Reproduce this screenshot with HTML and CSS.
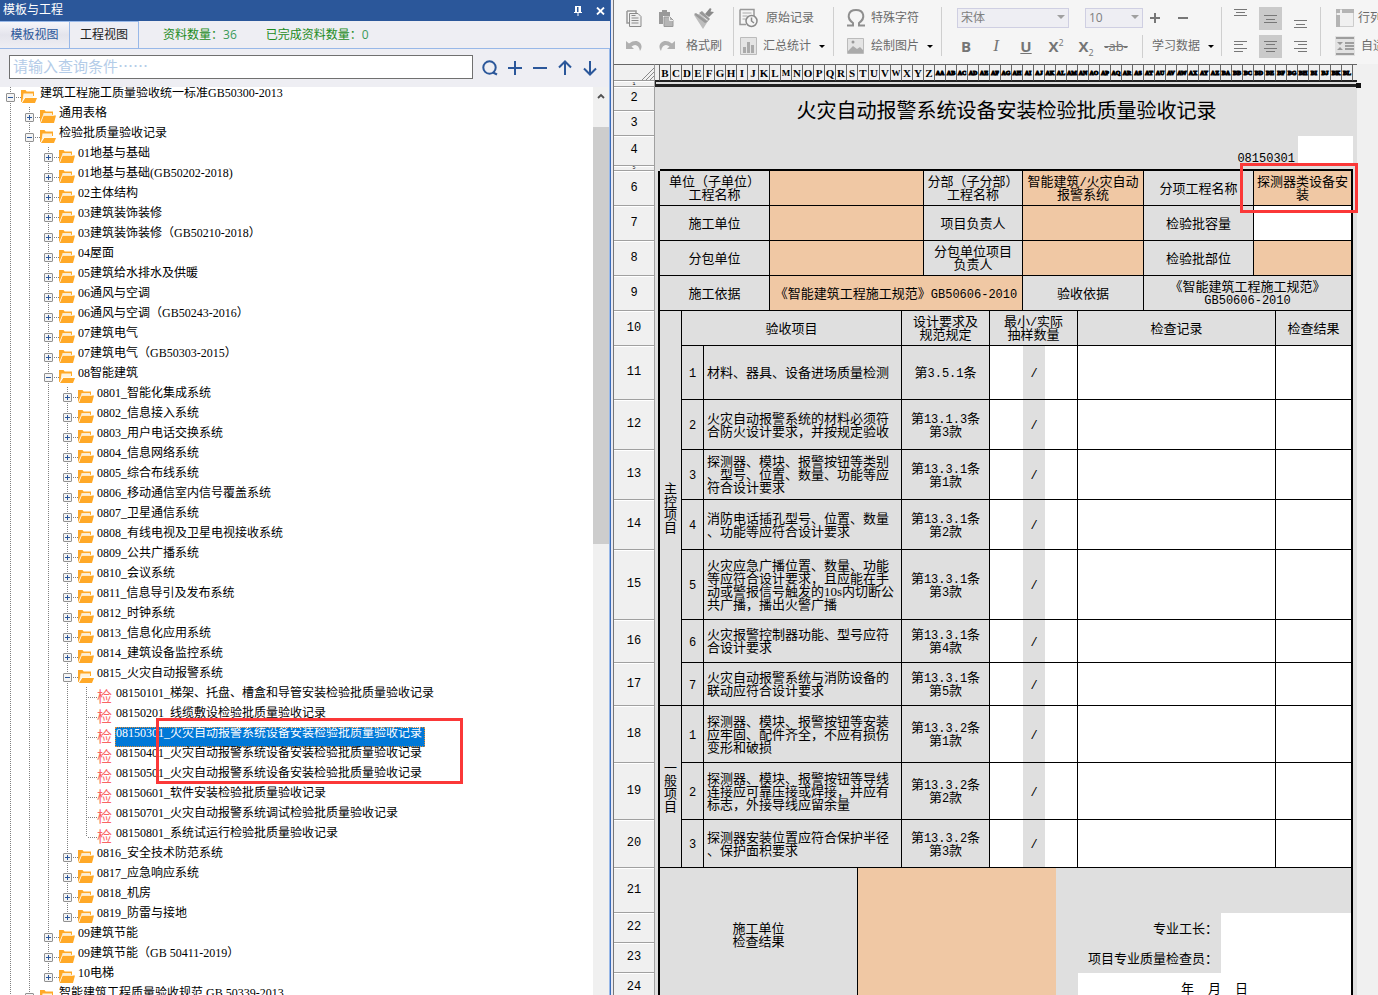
FILE: index.html
```html
<!DOCTYPE html>
<html lang="zh-CN">
<head>
<meta charset="utf-8">
<title>模板与工程</title>
<link rel="stylesheet" href="styles.css">
</head>
<body>
<svg class="defs" aria-hidden="true">
  <symbol id="fe" viewBox="0 0 16 13"><path d="M0 12V0h4.500l1.200 1.500H13V5H4L.5 12z" fill="#ffa928"/><path d="M3.500 3H12v2.500H3z" fill="#fdebc8"/><path d="M3.600 5.500H16L14 13H.6z" fill="#ffa928"/><path d="M.8 12L3.400 5.200H14" fill="none" stroke="#fff" stroke-width=".7"/></symbol>
  <symbol id="fo" viewBox="0 0 16 13"><path d="M0 12V0h4.500l1.200 1.500H13V6H3.600L.6 12z" fill="#ffa928"/><path d="M2.500 3.500H12v4H3L1.500 11z" fill="#fff3dc"/><path d="M4.200 8H16l-2 5H1z" fill="#ffa928"/></symbol>
</svg>
<div class="app">
  <aside class="dock">
    <header class="dock-title">
      <span>模板与工程</span>
      <span class="dock-tools">
        <button aria-label="固定"><svg width="8" height="10" viewBox="0 0 8 10"><path d="M1 0h6v6h1v1H4.500v3h-1V7H0V6h1z" fill="#fff"/><path d="M3 1h1.500v5H3z" fill="#2b579a"/></svg></button>
        <button aria-label="关闭"><svg width="9" height="8" viewBox="0 0 9 8"><path d="M1 .5l7 7M8 .5l-7 7" stroke="#fff" stroke-width="1.800"/></svg></button>
      </span>
    </header>
    <div class="tabs">
      <button class="tab on">模板视图</button><button class="tab">工程视图</button>
      <span class="stat">资料数量：<b>36</b></span>
      <span class="stat">已完成资料数量：<b>0</b></span>
    </div>
    <div class="search">
      <input type="text" aria-label="查询条件" placeholder="请输入查询条件……">
      <button aria-label="查询"><svg width="16" height="16" viewBox="0 0 16 16"><circle cx="7.500" cy="7.500" r="6.200"/><path d="M11 12.500l4 2"/></svg></button>
      <button aria-label="展开"><svg width="16" height="16" viewBox="0 0 16 16"><path d="M8 1v14M1 8h14"/></svg></button>
      <button aria-label="收起"><svg width="16" height="16" viewBox="0 0 16 16"><path d="M1 8h14"/></svg></button>
      <button aria-label="上一个"><svg width="16" height="16" viewBox="0 0 16 16"><path d="M8 15V2M2 7.500L8 1.500l6 6"/></svg></button>
      <button aria-label="下一个"><svg width="16" height="16" viewBox="0 0 16 16"><path d="M8 1v13M2 8.500l6 6 6-6"/></svg></button>
    </div>
    <div class="tree-area">
      <div class="tree-view">
      <ul class="tree">
        <li class="more"><div class="row"><button class="tg minus" aria-label="收起"></button><svg class="ic"><use href="#fo"/></svg><span>建筑工程施工质量验收统一标准GB50300-2013</span></div>
        <ul>
          <li><div class="row"><button class="tg" aria-label="展开"></button><svg class="ic"><use href="#fe"/></svg><span>通用表格</span></div></li>
          <li><div class="row"><button class="tg minus" aria-label="收起"></button><svg class="ic"><use href="#fo"/></svg><span>检验批质量验收记录</span></div>
          <ul>
            <li><div class="row"><button class="tg" aria-label="展开"></button><svg class="ic"><use href="#fe"/></svg><span>01地基与基础</span></div></li>
            <li><div class="row"><button class="tg" aria-label="展开"></button><svg class="ic"><use href="#fe"/></svg><span>01地基与基础(GB50202-2018)</span></div></li>
            <li><div class="row"><button class="tg" aria-label="展开"></button><svg class="ic"><use href="#fe"/></svg><span>02主体结构</span></div></li>
            <li><div class="row"><button class="tg" aria-label="展开"></button><svg class="ic"><use href="#fe"/></svg><span>03建筑装饰装修</span></div></li>
            <li><div class="row"><button class="tg" aria-label="展开"></button><svg class="ic"><use href="#fe"/></svg><span>03建筑装饰装修（GB50210-2018）</span></div></li>
            <li><div class="row"><button class="tg" aria-label="展开"></button><svg class="ic"><use href="#fe"/></svg><span>04屋面</span></div></li>
            <li><div class="row"><button class="tg" aria-label="展开"></button><svg class="ic"><use href="#fe"/></svg><span>05建筑给水排水及供暖</span></div></li>
            <li><div class="row"><button class="tg" aria-label="展开"></button><svg class="ic"><use href="#fe"/></svg><span>06通风与空调</span></div></li>
            <li><div class="row"><button class="tg" aria-label="展开"></button><svg class="ic"><use href="#fe"/></svg><span>06通风与空调（GB50243-2016）</span></div></li>
            <li><div class="row"><button class="tg" aria-label="展开"></button><svg class="ic"><use href="#fe"/></svg><span>07建筑电气</span></div></li>
            <li><div class="row"><button class="tg" aria-label="展开"></button><svg class="ic"><use href="#fe"/></svg><span>07建筑电气（GB50303-2015）</span></div></li>
            <li><div class="row"><button class="tg minus" aria-label="收起"></button><svg class="ic"><use href="#fo"/></svg><span>08智能建筑</span></div>
            <ul>
              <li><div class="row"><button class="tg" aria-label="展开"></button><svg class="ic"><use href="#fe"/></svg><span>0801_智能化集成系统</span></div></li>
              <li><div class="row"><button class="tg" aria-label="展开"></button><svg class="ic"><use href="#fe"/></svg><span>0802_信息接入系统</span></div></li>
              <li><div class="row"><button class="tg" aria-label="展开"></button><svg class="ic"><use href="#fe"/></svg><span>0803_用户电话交换系统</span></div></li>
              <li><div class="row"><button class="tg" aria-label="展开"></button><svg class="ic"><use href="#fe"/></svg><span>0804_信息网络系统</span></div></li>
              <li><div class="row"><button class="tg" aria-label="展开"></button><svg class="ic"><use href="#fe"/></svg><span>0805_综合布线系统</span></div></li>
              <li><div class="row"><button class="tg" aria-label="展开"></button><svg class="ic"><use href="#fe"/></svg><span>0806_移动通信室内信号覆盖系统</span></div></li>
              <li><div class="row"><button class="tg" aria-label="展开"></button><svg class="ic"><use href="#fe"/></svg><span>0807_卫星通信系统</span></div></li>
              <li><div class="row"><button class="tg" aria-label="展开"></button><svg class="ic"><use href="#fe"/></svg><span>0808_有线电视及卫星电视接收系统</span></div></li>
              <li><div class="row"><button class="tg" aria-label="展开"></button><svg class="ic"><use href="#fe"/></svg><span>0809_公共广播系统</span></div></li>
              <li><div class="row"><button class="tg" aria-label="展开"></button><svg class="ic"><use href="#fe"/></svg><span>0810_会议系统</span></div></li>
              <li><div class="row"><button class="tg" aria-label="展开"></button><svg class="ic"><use href="#fe"/></svg><span>0811_信息导引及发布系统</span></div></li>
              <li><div class="row"><button class="tg" aria-label="展开"></button><svg class="ic"><use href="#fe"/></svg><span>0812_时钟系统</span></div></li>
              <li><div class="row"><button class="tg" aria-label="展开"></button><svg class="ic"><use href="#fe"/></svg><span>0813_信息化应用系统</span></div></li>
              <li><div class="row"><button class="tg" aria-label="展开"></button><svg class="ic"><use href="#fe"/></svg><span>0814_建筑设备监控系统</span></div></li>
              <li><div class="row"><button class="tg minus" aria-label="收起"></button><svg class="ic"><use href="#fo"/></svg><span>0815_火灾自动报警系统</span></div>
              <ul class="leaves">
                <li><div class="row"><i>检</i><span>08150101_梯架、托盘、槽盒和导管安装检验批质量验收记录</span></div></li>
                <li><div class="row"><i>检</i><span>08150201_线缆敷设检验批质量验收记录</span></div></li>
                <li><div class="row"><i>检</i><span class="sel">08150301_火灾自动报警系统设备安装检验批质量验收记录</span><em class="mark mark-tree"></em></div></li>
                <li><div class="row"><i>检</i><span>08150401_火灾自动报警系统设备安装检验批质量验收记录</span></div></li>
                <li><div class="row"><i>检</i><span>08150501_火灾自动报警系统设备安装检验批质量验收记录</span></div></li>
                <li><div class="row"><i>检</i><span>08150601_软件安装检验批质量验收记录</span></div></li>
                <li><div class="row"><i>检</i><span>08150701_火灾自动报警系统调试检验批质量验收记录</span></div></li>
                <li><div class="row"><i>检</i><span>08150801_系统试运行检验批质量验收记录</span></div></li>
              </ul></li>
              <li><div class="row"><button class="tg" aria-label="展开"></button><svg class="ic"><use href="#fe"/></svg><span>0816_安全技术防范系统</span></div></li>
              <li><div class="row"><button class="tg" aria-label="展开"></button><svg class="ic"><use href="#fe"/></svg><span>0817_应急响应系统</span></div></li>
              <li><div class="row"><button class="tg" aria-label="展开"></button><svg class="ic"><use href="#fe"/></svg><span>0818_机房</span></div></li>
              <li><div class="row"><button class="tg" aria-label="展开"></button><svg class="ic"><use href="#fe"/></svg><span>0819_防雷与接地</span></div></li>
            </ul></li>
            <li><div class="row"><button class="tg" aria-label="展开"></button><svg class="ic"><use href="#fe"/></svg><span>09建筑节能</span></div></li>
            <li><div class="row"><button class="tg" aria-label="展开"></button><svg class="ic"><use href="#fe"/></svg><span>09建筑节能（GB 50411-2019）</span></div></li>
            <li><div class="row"><button class="tg" aria-label="展开"></button><svg class="ic"><use href="#fe"/></svg><span>10电梯</span></div></li>
          </ul></li>
          <li class="more"><div class="row"><button class="tg minus" aria-label="收起"></button><svg class="ic"><use href="#fo"/></svg><span>智能建筑工程质量验收规范 GB 50339-2013</span></div></li>
        </ul></li>
      </ul>
      </div>
      <div class="scroll"><svg width="8" height="6" viewBox="0 0 8 6"><path d="M1 5l3-3 3 3" fill="none" stroke="#505050" stroke-width="1.800"/></svg><div class="thumb"></div></div>
    </div>
  </aside>

  <main class="work">
    <div class="toolbar">
      <div class="grp g1">
        <div class="line">
          <button aria-label="复制"><svg width="16" height="17" viewBox="0 0 16 17"><path d="M1 1h9v2M1 1v12h2" fill="none" stroke="#999" stroke-width="1.500"/><path d="M3.500 3.500H12l3 3v10H3.500z" fill="#eee" stroke="#8a8a8a"/><path d="M5.500 8h7M5.500 10.500h7M5.500 13h7M5.500 5.500h4" stroke="#8a8a8a"/></svg></button>
          <button aria-label="粘贴"><svg width="16" height="17" viewBox="0 0 16 17"><path d="M1 2h3V0h5v2h3v4H5v8H1z" fill="#999"/><path d="M6 7h6l3 3v6.500H6z" fill="#b5b5b5" stroke="#999"/><path d="M11.500 7v3.500H15" fill="none" stroke="#eee"/></svg></button>
          <button class="wide" aria-label="格式刷工具"><svg width="22" height="21" viewBox="0 0 22 21"><path d="M1 7l6-1 8 7-5 8z" fill="#bdbdbd"/><path d="M1 6l2-1 11 8 1-1-9-7 3-2 8 8-3 3-2 1L3 8z" fill="#999"/><path d="M12 6l5-6 1.500 1-1 2.500L21 4l-5 5z" fill="#8a8a8a"/></svg></button>
        </div>
        <div class="line">
          <button aria-label="撤销"><svg width="17" height="12" viewBox="0 0 17 12"><path d="M0 1v8h8L5.500 6.500C9 3.500 13 5 14 11c5-7-3-14-11-7.500z" fill="#b0b0b0"/></svg></button>
          <button aria-label="重做"><svg width="17" height="12" viewBox="0 0 17 12"><path d="M17 1v8H9l2.500-2.500C8 3.500 4 5 3 11-2 4 6-3 14 3.500z" fill="#b0b0b0"/></svg></button>
          <button class="wide">格式刷</button>
        </div>
      </div>
      <div class="sep"></div>
      <div class="grp g2">
        <div class="line">
          <button class="txt"><svg width="22" height="20" viewBox="0 0 22 20"><path d="M2 1.500h14V8M2 1.500v15h6" fill="none" stroke="#999" stroke-width="1.500"/><path d="M4.500 5h9M4.500 8h5M4.500 11h3" stroke="#aaa"/><circle cx="13.500" cy="13" r="5.500" fill="#f5f5f5" stroke="#8a8a8a" stroke-width="1.500"/><path d="M13.500 9.500V13l2.500 2" fill="none" stroke="#8a8a8a" stroke-width="1.500"/></svg>&nbsp;原始记录</button>
        </div>
        <div class="line">
          <button class="txt"><svg width="22" height="18" viewBox="0 0 22 18"><path d="M2.500.5h16v17h-16z" fill="#e4e4e4" stroke="#bbb"/><path d="M5 10h3v6H5zM9 5h3v11H9zM13 8h3v8h-3z" fill="#aaa"/></svg>汇总统计<s></s></button>
        </div>
      </div>
      <div class="sep"></div>
      <div class="grp g3">
        <div class="line">
          <button class="txt"><svg width="24" height="20" viewBox="0 0 24 20"><path d="M3 17.500h6V15C2 10 4 2 12 2s10 8 3 13v2.500h6" fill="none" stroke="#8f8f8f" stroke-width="2"/></svg>特殊字符</button>
        </div>
        <div class="line">
          <button class="txt"><svg width="24" height="18" viewBox="0 0 24 18"><path d="M3.500 1.500h16v15h-16z" fill="#e4e4e4" stroke="#bbb"/><path d="M4 14l5-5 4 3 3-2 3 3v3H4z" fill="#aaa"/><circle cx="9" cy="5" r="1.500" fill="#999"/></svg>绘制图片<s></s></button>
        </div>
      </div>
      <div class="sep"></div>
      <div class="grp g4">
        <div class="line">
          <span class="pick font"><select aria-label="字体"><option>宋体</option></select></span>
          <span class="pick size"><select aria-label="字号"><option>10</option></select></span>
          <button class="step" aria-label="增大字号"><svg width="10" height="10" viewBox="0 0 10 10"><path d="M5 0v10M0 5h10" stroke="#777" stroke-width="2"/></svg></button>
          <button class="step" aria-label="减小字号"><svg width="10" height="10" viewBox="0 0 10 10"><path d="M0 5h10" stroke="#777" stroke-width="2"/></svg></button>
        </div>
        <div class="line fmt">
          <button class="f"><b>B</b></button><button class="f it">I</button><button class="f"><b class="ul">U</b></button><button class="f"><b>X<sup>2</sup></b></button><button class="f"><b>X<sub>2</sub></b></button><button class="f"><del>-ab-</del></button>
          <div class="sep short"></div>
          <button class="txt">学习数据<s></s></button>
        </div>
      </div>
      <div class="sep"></div>
      <div class="grp g5">
        <div class="line">
          <button aria-label="顶端对齐"><svg width="13" height="21" viewBox="0 0 13 21"><path d="M0 1.500h13M2 4.500h9M0 7.500h13"/></svg></button>
          <button class="act" aria-label="垂直居中"><svg width="13" height="21" viewBox="0 0 13 21"><path d="M0 7.500h13M2 11.500h9M0 14.500h13"/></svg></button>
          <button aria-label="底端对齐"><svg width="13" height="21" viewBox="0 0 13 21"><path d="M0 12.500h13M2 16.500h9M0 19.500h13"/></svg></button>
        </div>
        <div class="line">
          <button aria-label="左对齐"><svg width="13" height="13" viewBox="0 0 13 13"><path d="M0 1.500h13M0 4.500h9M0 8.500h13M0 11.500h9"/></svg></button>
          <button class="act" aria-label="居中"><svg width="13" height="13" viewBox="0 0 13 13"><path d="M0 1.500h13M2 4.500h9M0 8.500h13M2 11.500h9"/></svg></button>
          <button aria-label="右对齐"><svg width="13" height="13" viewBox="0 0 13 13"><path d="M0 1.500h13M4 4.500h9M0 8.500h13M4 11.500h9"/></svg></button>
        </div>
      </div>
      <div class="sep"></div>
      <div class="grp g6">
        <div class="line"><button class="txt"><svg width="20" height="18" viewBox="0 0 20 18"><path d="M1.500.5h17v17h-17z" fill="#f0f0f0" stroke="#ccc"/><path d="M1 0h4v4H1zM7 0h12v4H7zM1 6h4v12H1z" fill="#b4b4b4"/></svg>行列</button></div>
        <div class="line"><button class="txt"><svg width="20" height="20" viewBox="0 0 20 20"><path d="M0 0h20v20H0z" fill="#e2e2e2"/><path d="M1 2h18M1 18h18M10 7h9M10 10h9M10 13h9" stroke="#888" stroke-width="1.500"/><path d="M2 6h6L5 9zM2 14h6l-3-3z" fill="#999"/></svg>&nbsp;自适应</button></div>
      </div>
    </div>

    <div class="sheet-area">
    <table class="sheet">
      <colgroup><col class="c-row"><col class="c-a"><col class="c-n" span="63"><col class="c-end"></colgroup>
      <thead>
        <tr>
          <th class="corner"><svg width="12" height="12" viewBox="0 0 12 12"><path d="M0 12L12 0M4 12l8-8M8 12l4-4" stroke="#888"/></svg></th><th></th>
          <th>B</th><th>C</th><th>D</th><th>E</th><th>F</th><th>G</th><th>H</th><th>I</th><th>J</th><th>K</th><th>L</th><th class="m">M</th><th>N</th><th>O</th><th>P</th><th>Q</th><th>R</th><th>S</th><th>T</th><th>U</th><th>V</th><th class="m">W</th><th>X</th><th>Y</th><th>Z</th>
          <th class="d">AA</th><th class="d">AB</th><th class="d">AC</th><th class="d">AD</th><th class="d">AE</th><th class="d">AF</th><th class="d">AG</th><th class="d">AH</th><th class="d">AI</th><th class="d">AJ</th><th class="d">AK</th><th class="d">AL</th><th class="d">AM</th><th class="d">AN</th><th class="d">AO</th><th class="d">AP</th><th class="d">AQ</th><th class="d">AR</th><th class="d">AS</th><th class="d">AT</th><th class="d">AU</th><th class="d">AV</th><th class="d">AW</th><th class="d">AX</th><th class="d">AY</th><th class="d">AZ</th>
          <th class="d">BA</th><th class="d">BB</th><th class="d">BC</th><th class="d">BD</th><th class="d">BE</th><th class="d">BF</th><th class="d">BG</th><th class="d">BH</th><th class="d">BI</th><th class="d">BJ</th><th class="d">BK</th><th class="d">BL</th><th class="nb"></th>
        </tr>
      </thead>
      <tbody>
        <tr class="h6"><th><p>1</p></th><td class="cursor" colspan="65"><em class="handle"></em></td></tr>
        <tr class="h24"><th>2</th><td rowspan="4" class="a"></td><td class="n title" rowspan="2" colspan="63">火灾自动报警系统设备安装检验批质量验收记录</td><td class="n" rowspan="23"></td></tr>
        <tr class="h25"><th>3</th></tr>
        <tr class="h30"><th>4</th><td class="n code" colspan="58"><u>08150301</u></td><td class="n w" colspan="5"></td></tr>
        <tr class="h5"><th><p>5</p></th><td class="top" colspan="63"></td></tr>
        <tr class="h35"><th>6</th><td class="a k" rowspan="19"></td><td colspan="10">单位（子单位）<br>工程名称</td><td class="o" colspan="14"></td><td colspan="9">分部（子分部）<br>工程名称</td><td class="o" colspan="11">智能建筑<u>/</u>火灾自动<br>报警系统</td><td colspan="10">分项工程名称</td><td class="o r spot" colspan="9">探测器类设备安<br>装<em class="mark mark-cell"></em></td></tr>
        <tr class="h35"><th>7</th><td colspan="10">施工单位</td><td class="o" colspan="14"></td><td colspan="9">项目负责人</td><td class="o" colspan="11"></td><td colspan="10">检验批容量</td><td class="w r" colspan="9"></td></tr>
        <tr class="h35"><th>8</th><td colspan="10">分包单位</td><td class="o" colspan="14"></td><td colspan="9">分包单位项目<br>负责人</td><td class="o" colspan="11"></td><td colspan="10">检验批部位</td><td class="o r" colspan="9"></td></tr>
        <tr class="h35"><th>9</th><td colspan="10">施工依据</td><td class="o" colspan="23">《智能建筑工程施工规范》<u>GB50606-2010</u></td><td colspan="11">验收依据</td><td class="r" colspan="19">《智能建筑工程施工规范》<br><u>GB50606-2010</u></td></tr>
        <tr class="h35"><th>10</th><td rowspan="8" colspan="2">主<br>控<br>项<br>目</td><td colspan="20">验收项目</td><td colspan="8">设计要求及<br>规范规定</td><td colspan="8">最小<u>/</u>实际<br>抽样数量</td><td colspan="18">检查记录</td><td class="r" colspan="7">检查结果</td></tr>
        <tr class="h54"><th>11</th><td colspan="2"><u>1</u></td><td class="l" colspan="18">材料、器具、设备进场质量检测</td><td colspan="8">第<u>3.5.1</u>条</td><td class="w q" colspan="3"></td><td class="q" colspan="2"><u>/</u></td><td class="w" colspan="3"></td><td class="w" colspan="18"></td><td class="w r" colspan="7"></td></tr>
        <tr class="h50"><th>12</th><td colspan="2"><u>2</u></td><td class="l" colspan="18">火灾自动报警系统的材料必须符<br>合防火设计要求，并按规定验收</td><td colspan="8">第<u>13.1.3</u>条<br>第<u>3</u>款</td><td class="w q" colspan="3"></td><td class="q" colspan="2"><u>/</u></td><td class="w" colspan="3"></td><td class="w" colspan="18"></td><td class="w r" colspan="7"></td></tr>
        <tr class="h50"><th>13</th><td colspan="2"><u>3</u></td><td class="l" colspan="18">探测器、模块、报警按钮等类别<br>、型号、位置、数量、功能等应<br>符合设计要求</td><td colspan="8">第<u>13.3.1</u>条<br>第<u>1</u>款</td><td class="w q" colspan="3"></td><td class="q" colspan="2"><u>/</u></td><td class="w" colspan="3"></td><td class="w" colspan="18"></td><td class="w r" colspan="7"></td></tr>
        <tr class="h50"><th>14</th><td colspan="2"><u>4</u></td><td class="l" colspan="18">消防电话插孔型号、位置、数量<br>、功能等应符合设计要求</td><td colspan="8">第<u>13.3.1</u>条<br>第<u>2</u>款</td><td class="w q" colspan="3"></td><td class="q" colspan="2"><u>/</u></td><td class="w" colspan="3"></td><td class="w" colspan="18"></td><td class="w r" colspan="7"></td></tr>
        <tr class="h70"><th>15</th><td colspan="2"><u>5</u></td><td class="l" colspan="18">火灾应急广播位置、数量、功能<br>等应符合设计要求，且应能在手<br>动或警报信号触发的10s内切断公<br>共广播，播出火警广播</td><td colspan="8">第<u>13.3.1</u>条<br>第<u>3</u>款</td><td class="w q" colspan="3"></td><td class="q" colspan="2"><u>/</u></td><td class="w" colspan="3"></td><td class="w" colspan="18"></td><td class="w r" colspan="7"></td></tr>
        <tr class="h43"><th>16</th><td colspan="2"><u>6</u></td><td class="l" colspan="18">火灾报警控制器功能、型号应符<br>合设计要求</td><td colspan="8">第<u>13.3.1</u>条<br>第<u>4</u>款</td><td class="w q" colspan="3"></td><td class="q" colspan="2"><u>/</u></td><td class="w" colspan="3"></td><td class="w" colspan="18"></td><td class="w r" colspan="7"></td></tr>
        <tr class="h43"><th>17</th><td colspan="2"><u>7</u></td><td class="l" colspan="18">火灾自动报警系统与消防设备的<br>联动应符合设计要求</td><td colspan="8">第<u>13.3.1</u>条<br>第<u>5</u>款</td><td class="w q" colspan="3"></td><td class="q" colspan="2"><u>/</u></td><td class="w" colspan="3"></td><td class="w" colspan="18"></td><td class="w r" colspan="7"></td></tr>
        <tr class="h57"><th>18</th><td rowspan="3" colspan="2">一<br>般<br>项<br>目</td><td colspan="2"><u>1</u></td><td class="l" colspan="18">探测器、模块、报警按钮等安装<br>应牢固、配件齐全，不应有损伤<br>变形和破损</td><td colspan="8">第<u>13.3.2</u>条<br>第<u>1</u>款</td><td class="w q" colspan="3"></td><td class="q" colspan="2"><u>/</u></td><td class="w" colspan="3"></td><td class="w" colspan="18"></td><td class="w r" colspan="7"></td></tr>
        <tr class="h57"><th>19</th><td colspan="2"><u>2</u></td><td class="l" colspan="18">探测器、模块、报警按钮等导线<br>连接应可靠压接或焊接，并应有<br>标志，外接导线应留余量</td><td colspan="8">第<u>13.3.2</u>条<br>第<u>2</u>款</td><td class="w q" colspan="3"></td><td class="q" colspan="2"><u>/</u></td><td class="w" colspan="3"></td><td class="w" colspan="18"></td><td class="w r" colspan="7"></td></tr>
        <tr class="h48"><th>20</th><td colspan="2"><u>3</u></td><td class="l" colspan="18">探测器安装位置应符合保护半径<br>、保护面积要求</td><td colspan="8">第<u>13.3.2</u>条<br>第<u>3</u>款</td><td class="w q" colspan="3"></td><td class="q" colspan="2"><u>/</u></td><td class="w" colspan="3"></td><td class="w" colspan="18"></td><td class="w r" colspan="7"></td></tr>
        <tr class="h45"><th>21</th><td rowspan="4" colspan="18">施工单位<br>检查结果</td><td class="o n" rowspan="4" colspan="18"></td><td class="n r" colspan="27"></td></tr>
        <tr class="h30"><th>22</th><td class="n" rowspan="3" colspan="2"></td><td class="n sign" colspan="13">专业工长：</td><td class="w n r" colspan="12"></td></tr>
        <tr class="h30"><th>23</th><td class="n sign" colspan="13">项目专业质量检查员：</td><td class="w n r" colspan="12"></td></tr>
        <tr class="h30"><th>24</th><td class="w n r date" colspan="25"><span>年</span><span>月</span><span>日</span></td></tr>
      </tbody>
    </table>
    </div>
  </main>
</div>
</body>
</html>
```
FILE: styles.css
```css
* { box-sizing: border-box; }
body { margin: 0; font: 12px/13px "Liberation Serif", "Noto Sans CJK SC", sans-serif; color: #000; background: #f0f0f0; }
button { font: inherit; color: inherit; background: none; border: 0; padding: 0; margin: 0; display: flex; align-items: center; justify-content: center; white-space: nowrap; }
.defs { display: none; }
.app { display: flex; height: 100vh; overflow: hidden; background: #e9e9f2; }

/* dock panel */
.dock { flex: none; width: 611px; display: flex; flex-direction: column; background: #eeeef3; border-right: 1px solid #3a6cb8; }
.dock-title { height: 21px; flex: none; background: #2b579a; color: #fff; display: flex; justify-content: space-between; align-items: center; padding: 0 5px 0 3px; }
.dock-tools { display: flex; gap: 14px; }
.tabs { height: 28px; flex: none; display: flex; border-bottom: 1px solid #98b8e8; }
.tab { width: 70px; color: #222; border: 1px solid #98b8e8; border-bottom: 0; }
.tab.on { color: #2b579a; width: 69px; border-width: 1px 0 0; background: linear-gradient(#f6f6fa, #e4e4ec 50%, #eeeef3); }
.stat { color: #228b22; margin-left: 24px; line-height: 29px; }
.stat + .stat { margin-left: 29px; }
.stat b { font: 12px/13px "Open Sans", sans-serif; color: #3a9a5a; }
.search { height: 38px; flex: none; display: flex; align-items: center; padding: 0 11px 0 9px; gap: 9px; border-right: 1px solid #98b8e8; }
.search input { flex: 1; min-width: 0; height: 24px; margin-bottom: 2px; border: 1px solid #707070; background: #fff; padding: 0 3px 3px; font: 15px/18px "Noto Sans CJK SC", sans-serif; outline: 0; }
.search input::placeholder { color: #b4cce8; opacity: 1; }
.search button { width: 16px; }
.search svg { fill: none; stroke: #2b579a; stroke-width: 2; }

/* tree */
.tree-area { flex: 1; min-height: 0; display: flex; background: #fff; border-right: 1px solid #98b8e8; }
.tree-view { flex: 1; overflow: hidden; }
.tree, .tree ul { list-style: none; margin: 0; padding: 0; }
.tree ul { padding-left: 19px; }
.tree li { background: repeating-linear-gradient(#808080 0 1px, transparent 1px 2px) 10px 0 / 1px 100% no-repeat; }
.tree li:last-child { background-size: 1px 10px; }
.tree li.more { background-size: 1px 100%; }
.row { position: relative; height: 20px; display: flex; align-items: flex-start; padding-left: 6px; white-space: nowrap; }
.row::before { content: ""; position: absolute; left: 11px; top: 10px; width: 10px; height: 1px; background: repeating-linear-gradient(90deg, transparent 0 1px, #808080 1px 2px); }
.tg { position: relative; width: 9px; height: 9px; margin-top: 6px; border: 1px solid #919191; border-radius: 1px; background: linear-gradient(#2b579a, #2b579a) center / 5px 1px no-repeat, linear-gradient(#2b579a, #2b579a) center / 1px 5px no-repeat, #f4f4f4; }
.tg.minus { background: linear-gradient(#2b579a, #2b579a) center / 5px 1px no-repeat, #f4f4f4; }
.ic { width: 16px; height: 13px; margin: 3px 0 0 6px; }
.row span { margin-left: 2px; padding: 0 2px 0 1px; }
.leaves i { position: relative; font: 15px/18px "Noto Sans CJK SC", sans-serif; width: 15px; margin: 0 0 0 15px; color: #fa6464; }
.leaves .row span { margin-left: 3px; }
.row .sel { background: #0078d7; color: #fff; height: 20px; padding-right: 3px; outline: 1px dotted #e08a30; outline-offset: -1px; }
.scroll { width: 16px; background: #f0f0f0; text-align: center; }
.scroll svg { display: block; margin: 6px auto 0; }
.thumb { margin-top: 28px; height: 417px; background: #cdcdcd; }
.mark { position: absolute; border: 3px solid #fb3838; z-index: 2; }
.mark-tree { left: 80px; top: -9px; width: 307px; height: 66px; }
.mark-cell { left: -14px; top: -8px; right: -7px; bottom: -8px; }

/* toolbar */
.work { flex: 1; min-width: 0; margin-left: 2px; display: flex; flex-direction: column; background: #f0f0f0; border-left: 1px solid #777; }
.toolbar { height: 64px; flex: none; display: flex; overflow: hidden; background: #f5f5f5; color: #6a6a6a; }
.sep { flex: none; width: 1px; height: 49px; margin-top: 7px; background: #cfcfcf; }
.sep.short { height: 23px; margin: 0 9px 0 11px; }
.grp { flex: none; padding-top: 4px; }
.line { height: 28px; display: flex; align-items: center; }
.line svg { flex: none; }
.g1 { width: 119px; padding-left: 4px; }
.g1 button { width: 32px; }
.g1 .wide { width: 44px; }
.g2 { width: 99px; padding-left: 4px; }
.g3 { width: 107px; padding-left: 10px; }
.g4 { width: 279px; padding-left: 15px; }
.g5 { width: 98px; padding-left: 7px; }
.g6 { padding-left: 14px; }
.txt { gap: 3px; }
.txt s { border: 3px solid transparent; border-top-color: #000; border-bottom: 0; margin-left: 5px; }
.pick { position: relative; flex: none; }
.pick::after { content: ""; position: absolute; right: 4px; top: 7px; border: 4px solid transparent; border-top-color: #a0a0a0; border-bottom: 0; pointer-events: none; }
.pick select { appearance: none; width: 100%; height: 20px; border: 1px solid #cfcfe2; border-radius: 0; background: #eeeef3; color: #808080; padding: 0 3px; font: 12px/16px "Open Sans", "Noto Sans CJK SC", sans-serif; }
.font { width: 112px; }
.size { width: 58px; margin-left: 16px; }
.step { width: 24px; margin-right: 4px; }
.fmt { margin-left: -6px; }
.f { width: 30px; font: 15px/20px "Open Sans", sans-serif; color: #757575; }
.it { font: italic 17px/20px "Liberation Serif", serif; }
.ul { text-decoration: underline; }
.fmt sup, .fmt sub { font-size: 9px; line-height: 1px; font-weight: normal; }
.fmt del { font-size: 13px; }
.g5 .line { gap: 7px; }
.g5 button { width: 23px; height: 23px; }
.g5 .act { background: #cacaca; }
.g5 svg { fill: none; stroke: #777; }

/* sheet */
.sheet-area { flex: 1; min-height: 0; overflow: hidden; }
.sheet { table-layout: fixed; width: 743px; border-collapse: separate; border-spacing: 0; }
.c-row { width: 41px; }
.c-a { width: 5px; }
.c-n { width: 11px; }
.c-end { width: 4px; }
.sheet th, .sheet td { padding: 0; text-align: center; vertical-align: middle; white-space: nowrap; }
.sheet thead th { height: 17px; border: solid #666; border-width: 1px 1px 1px 0; border-bottom-color: #222; font: bold 11px/14px "Liberation Serif", serif; }
.sheet thead .m { font-size: 9px; }
.sheet thead .d { font-size: 6px; -webkit-text-stroke: 1px #000; }
.sheet thead .corner { text-align: right; border-bottom-color: #999; border-right-color: #999; }
.corner svg { display: inline-block; vertical-align: bottom; }
.sheet thead .nb { border-right: 0; }
tbody th { font: 12px/13px "Liberation Mono", monospace; background: #f0f0f0; border: solid #a0a0a0; border-width: 0 1px 1px 0; box-shadow: inset 0 1px #fff; }
tbody th p { margin: 0; height: 4px; font-size: 5px; line-height: 4px; overflow: hidden; }
.sheet td { background: #dfdfdf; border: solid #000; border-width: 0 1px 1px 0; font-size: 13px; line-height: 13px; }
.sheet .o { background: #f0c8a4; }
.sheet .w { background: #fff; }
.sheet .r { border-right-width: 2px; }
.sheet .q { border-right: 0; }
.sheet .n { border-width: 0; }
.sheet .n.r { border-right-width: 2px; }
.sheet .a { border-width: 0; }
.sheet .a.k { border-right-width: 2px; }
.sheet .top { border-width: 0 0 2px; }
.sheet .l { text-align: left; padding-left: 3px; }
.sheet .title { font-size: 20px; line-height: 24px; padding-bottom: 2px; }
.sheet .code { text-align: right; vertical-align: bottom; padding: 0 3px 2px 0; }
.sheet .sign { text-align: right; padding-right: 3px; }
.date span { margin: 0 7px; }
.sheet .cursor { position: relative; background: #dfdfdf; border: solid #222; border-width: 1px 0 3px 1px; }
.handle { position: absolute; right: -4px; bottom: -4px; width: 5px; height: 5px; background: #111; }
.sheet td.spot { position: relative; }
.sheet u { text-decoration: none; font: 12px/1px "Liberation Mono", monospace; }
.h5 { height: 5px; } .h6 { height: 6px; } .h24 { height: 24px; } .h25 { height: 25px; }
.h30 { height: 30px; } .h35 { height: 35px; } .h43 { height: 43px; } .h45 { height: 45px; }
.h48 { height: 48px; } .h50 { height: 50px; } .h54 { height: 54px; } .h57 { height: 57px; } .h70 { height: 70px; }
```
